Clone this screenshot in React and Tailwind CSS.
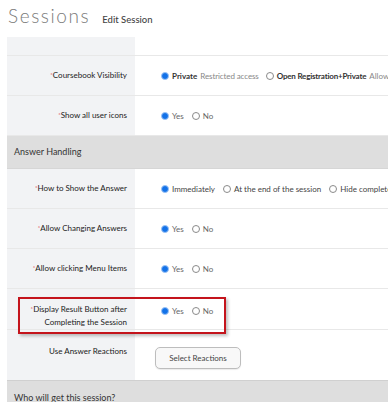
import React from "react";

const Radio = ({ checked }) =>
  checked ? (
    <span className="inline-flex w-[8px] h-[8px] rounded-full bg-[#1372e8] border border-[#9cc3f5] items-center justify-center shrink-0" />
  ) : (
    <span className="inline-block w-[8px] h-[8px] rounded-full border border-[#8a8a8a] bg-white shrink-0" />
  );

const Req = () => <span className="text-[#e0393e] text-[6px] align-top relative top-[-1px]">*</span>;

const Row = ({ label, req = true, children, h = "h-[40px]", labelTop = false }) => (
  <div className={`flex ${h} border-b border-[#e8e8e8]`}>
    <div className={`w-[128px] shrink-0 bg-[#f2f3f5] flex ${labelTop ? "items-start pt-[14px]" : "items-center"} justify-end pr-[8px] text-right text-[8px] text-[#222] leading-[13px]`}>
      <div className="whitespace-nowrap">
        {req && <Req />}
        {label}
      </div>
    </div>
    <div className={`flex-1 min-w-0 bg-white flex ${labelTop ? "items-start pt-[16px]" : "items-center"} pl-[26px] text-[8px] whitespace-nowrap overflow-hidden`}>
      {children}
    </div>
  </div>
);

const YesNo = () => (
  <div className="flex items-center gap-[3px]">
    <Radio checked />
    <span className="text-[#666] mr-[5px]">Yes</span>
    <Radio />
    <span className="text-[#666]">No</span>
  </div>
);

export default function App() {
  return (
    <div className="w-[388px] h-[402px] bg-white overflow-hidden relative" style={{ fontFamily: "Lato, 'Open Sans', sans-serif" }}>
      <div className="flex items-baseline pl-[8px] h-[37px] pt-[3px]">
        <span className="text-[19px] font-light text-[#7a7a7a] leading-[26px] tracking-[1.6px]">Sessions</span>
        <span className="ml-[12px] text-[9.5px] text-[#444] font-medium">Edit Session</span>
      </div>
      <div className="ml-[7px]">
        <div className="flex h-[19px] border-b border-[#e8e8e8]">
          <div className="w-[128px] shrink-0 bg-[#f2f3f5]" />
          <div className="flex-1 bg-white" />
        </div>
        <Row label="Coursebook Visibility">
          <div className="flex items-center gap-[3px]">
            <Radio checked />
            <span className="font-bold text-[#333]">Private</span>
            <span className="text-[#888] mr-[4px] tracking-[-0.1px]">Restricted access</span>
            <Radio />
            <span className="font-bold text-[#333] tracking-[-0.2px]">Open Registration+Private</span>
            <span className="text-[#888]">Allow access</span>
          </div>
        </Row>
        <Row label="Show all user icons">
          <YesNo />
        </Row>
        <div className="h-[33px] bg-[#dedede] flex items-center pl-[7px] text-[9px] text-[#333] border-b border-[#d6d6d6]">
          Answer Handling
        </div>
        <Row label="How to Show the Answer">
          <div className="flex items-center gap-[3px] text-[#444]">
            <Radio checked />
            <span className="mr-[5px]">Immediately</span>
            <Radio />
            <span className="mr-[5px]">At the end of the session</span>
            <Radio />
            <span>Hide completely</span>
          </div>
        </Row>
        <Row label="Allow Changing Answers">
          <YesNo />
        </Row>
        <Row label="Allow clicking Menu Items">
          <YesNo />
        </Row>
        <Row label={<>Display Result Button after<br />Completing the Session</>} labelTop h="h-[41px]">
          <YesNo />
        </Row>
        <div className="flex h-[50px]">
          <div className="w-[128px] shrink-0 bg-[#f2f3f5] flex justify-end pr-[8px] pt-[15px] text-[8px] text-[#222] whitespace-nowrap">
            Use Answer Reactions
          </div>
          <div className="flex-1 bg-white pl-[20px] pt-[13px]">
            <button className="w-[86px] h-[22px] rounded-[5px] border border-[#bdbdbd] bg-[#f8f8f8] text-[8px] text-[#444] shadow-[0_1px_1px_rgba(0,0,0,0.08)]">
              Select Reactions
            </button>
          </div>
        </div>
        <div className="h-[30px] bg-[#dedede] border-t border-[#d0d0d0] flex items-start pt-[10px] pl-[7px] text-[9px] text-[#333]">
          Who will get this session?
        </div>
      </div>
      <div className="absolute left-[18px] top-[297px] w-[208px] h-[37px] border-2 border-[#c4141c] shadow-[2px_2px_3px_rgba(0,0,0,0.25)] pointer-events-none" />
    </div>
  );
}
